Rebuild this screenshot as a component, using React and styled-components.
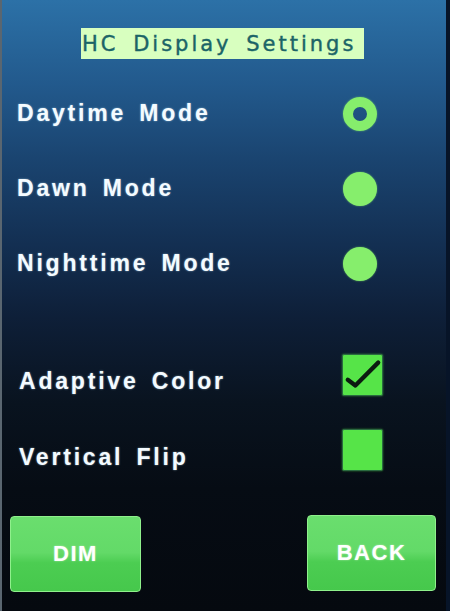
import React from "react";
import styled, { createGlobalStyle } from "styled-components";

const GlobalStyle = createGlobalStyle`
  html, body {
    margin: 0;
    padding: 0;
    background: #05090f;
  }
`;

const Screen = styled.div`
  width: 450px;
  height: 611px;
  box-sizing: border-box;
  display: flex;
  flex-direction: column;
  padding-top: 28px;
  padding-bottom: 19px;
  background: linear-gradient(
    180deg,
    #2c71a7 0%,
    #22598c 14%,
    #1a4470 26%,
    #132f52 40%,
    #0e1f38 52%,
    #09131f 66%,
    #060c14 80%,
    #05090f 100%
  );
  border-left: 2px solid #5a6670;
  border-right: 4px solid #071428;
  font-family: "Liberation Sans", Arial, sans-serif;
  overflow: hidden;
`;

const TitleBar = styled.div`
  align-self: flex-start;
  margin-left: 79px;
  width: 283px;
  height: 31px;
  box-sizing: border-box;
  display: flex;
  align-items: center;
  background: #d8ffbf;
  color: #1b6467;
  font-family: "DejaVu Sans", sans-serif;
  font-size: 21px;
  letter-spacing: 3px;
  word-spacing: 5px;
  white-space: nowrap;
  -webkit-text-stroke: 0.4px #1b6467;
`;

const TitleText = styled.span`
  margin-left: 1px;
`;

const List = styled.div`
  margin-top: 17px;
  display: flex;
  flex-direction: column;
`;

const Row = styled.div`
  height: 75px;
  display: grid;
  grid-template-columns: 1fr 60px;
  align-items: center;
  padding: 0 56px 0 ${(p) => p.$indent || 15}px;
`;

const Spacer = styled.div`
  height: 36px;
`;

const Label = styled.span`
  color: #f4fbff;
  font-weight: bold;
  font-size: 23px;
  letter-spacing: 2.8px;
  word-spacing: 4px;
  text-shadow: 0 0 2px rgba(200, 240, 255, 0.6);
  white-space: nowrap;
  margin-top: ${(p) => p.$drop || 0}px;
`;

const Control = styled.div`
  justify-self: center;
`;

const Radio = styled.div`
  width: 34px;
  height: 34px;
  border-radius: 50%;
  box-sizing: border-box;
  background: ${(p) => (p.$selected ? "transparent" : "#86ee6c")};
  border: ${(p) => (p.$selected ? "10px solid #86ee6c" : "none")};
  box-shadow: 0 0 2px rgba(134, 238, 108, 0.6);
`;

const Checkbox = styled.div`
  width: 41px;
  height: 42px;
  margin-left: 5px;
  box-sizing: border-box;
  border: 1px solid #2a6a40;
  border-radius: 2px;
  background: #56e448;
  display: flex;
  align-items: center;
  justify-content: center;
  box-shadow: 0 0 2px rgba(86, 228, 72, 0.6);
`;

const Buttons = styled.div`
  margin-top: auto;
  display: flex;
  justify-content: space-between;
  align-items: flex-end;
  padding: 0 10px 0 8px;
`;

const Button = styled.button`
  width: ${(p) => p.$width}px;
  height: 76px;
  border: 1px solid #8ff08c;
  border-radius: 4px;
  background: linear-gradient(180deg, #6ade6e 0%, #63da68 48%, #4ccd52 62%, #46c84c 100%);
  color: #ffffff;
  font-family: "Liberation Sans", Arial, sans-serif;
  font-weight: bold;
  font-size: 22px;
  letter-spacing: 1.5px;
  text-shadow: 0 0 2px rgba(255, 255, 255, 0.5);
  cursor: pointer;
  margin-bottom: ${(p) => p.$lift || 0}px;
`;

const CheckMark = () => (
  <svg width="41" height="42" viewBox="0 0 41 42">
    <path d="M5 26 L13 32 L37 8" fill="none" stroke="#0c1a10" strokeWidth="4.5" strokeLinecap="round" strokeLinejoin="round" />
  </svg>
);

export default function App() {
  return (
    <>
      <GlobalStyle />
      <Screen>
        <TitleBar>
          <TitleText>HC Display Settings</TitleText>
        </TitleBar>
        <List>
          <Row>
            <Label>Daytime Mode</Label>
            <Control>
              <Radio $selected />
            </Control>
          </Row>
          <Row>
            <Label>Dawn Mode</Label>
            <Control>
              <Radio />
            </Control>
          </Row>
          <Row>
            <Label>Nighttime Mode</Label>
            <Control>
              <Radio />
            </Control>
          </Row>
          <Spacer />
          <Row $indent={17}>
            <Label $drop={14}>Adaptive Color</Label>
            <Control>
              <Checkbox>
                <CheckMark />
              </Checkbox>
            </Control>
          </Row>
          <Row $indent={17}>
            <Label $drop={16}>Vertical Flip</Label>
            <Control>
              <Checkbox />
            </Control>
          </Row>
        </List>
        <Buttons>
          <Button $width={131}>DIM</Button>
          <Button $width={129} $lift={1}>BACK</Button>
        </Buttons>
      </Screen>
    </>
  );
}
